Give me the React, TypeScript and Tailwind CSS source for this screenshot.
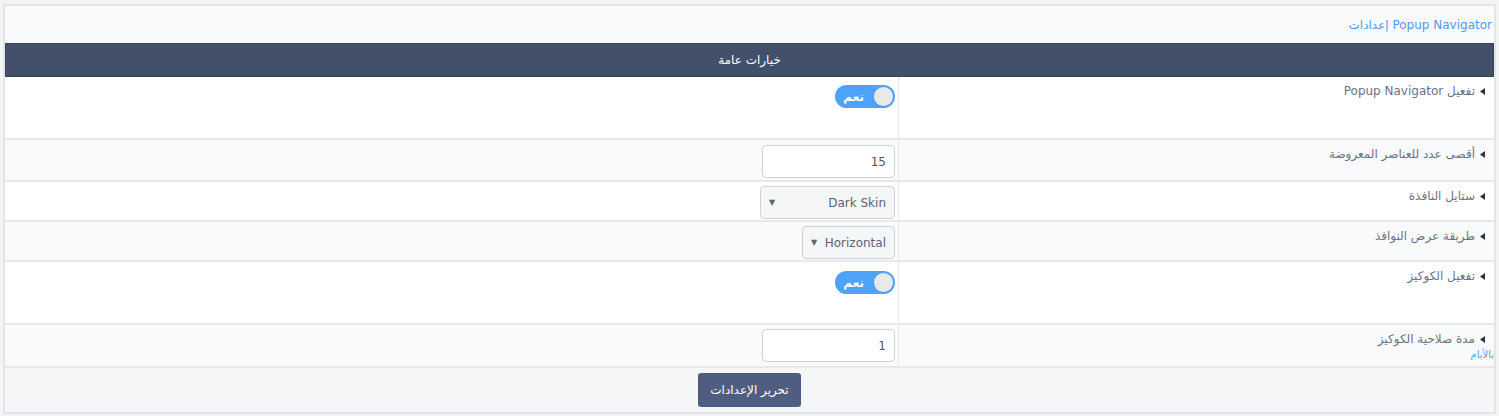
import type { ReactNode } from 'react';

const font = { fontFamily: '"DejaVu Sans", "Noto Sans", sans-serif' };

function Arrow() {
  return (
    <svg width="5" height="7" viewBox="0 0 5 7" className="ml-[5px] shrink-0">
      <path d="M0 3.5 L5 0 L5 7 Z" fill="#333" />
    </svg>
  );
}

function Toggle() {
  return (
    <div className="flex h-[23px] w-[60px] items-center rounded-full bg-[#4ea3f8] p-[2px]">
      <div className="h-[19px] w-[19px] rounded-full bg-[#e9e9e9]" />
      <span className="mr-[10px] text-[12px] font-bold leading-none text-white">نعم</span>
    </div>
  );
}

function TextBox({ value }: { value: string }) {
  return (
    <div className="flex h-[33px] w-[133px] items-center rounded-[4px] border border-[#cfd2d6] bg-white px-[8px] text-[12px] text-[#555]">
      {value}
    </div>
  );
}

function Select({ value, width }: { value: string; width: string }) {
  return (
    <div
      className={`flex h-[33px] ${width} items-center justify-between rounded-[4px] border border-[#cfd2d6] bg-[#f5f6f7] px-[8px] text-[12px] text-[#5d6272]`}
    >
      <span>{value}</span>
      <span className="text-[8px] text-[#666]">▼</span>
    </div>
  );
}

type Row = {
  label: ReactNode;
  note?: string;
  control: ReactNode;
  height: string;
  pad: string;
  bg: string;
};

const rows: Row[] = [
  { label: 'تفعيل Popup Navigator', control: <Toggle />, height: 'h-[63px]', pad: 'pt-[8px]', bg: 'bg-white' },
  { label: 'أقصى عدد للعناصر المعروضة', control: <TextBox value="15" />, height: 'h-[42px]', pad: 'pt-[5px]', bg: 'bg-[#f9fafb]' },
  { label: 'ستايل النافذة', control: <Select value="Dark Skin" width="w-[135px]" />, height: 'h-[40px]', pad: 'pt-[4px]', bg: 'bg-white' },
  { label: 'طريقة عرض النوافذ', control: <Select value="Horizontal" width="w-[93px]" />, height: 'h-[40px]', pad: 'pt-[4px]', bg: 'bg-[#f9fafb]' },
  { label: 'تفعيل الكوكيز', control: <Toggle />, height: 'h-[63px]', pad: 'pt-[9px]', bg: 'bg-white' },
  { label: 'مدة صلاحية الكوكيز', note: 'بالأيام', control: <TextBox value="1" />, height: 'h-[43px]', pad: 'pt-[4px]', bg: 'bg-[#f9fafb]' },
];

export default function App() {
  return (
    <div dir="rtl" style={font} className="h-[416px] w-[1499px] bg-[#f3f4f4] pl-[3px] pr-[3px] pt-[4px]">
      <div className="border-2 border-[#e3e5e7] bg-white">
        <div className="flex h-[37px] items-center bg-[#f9fafb] pr-[2px] text-[12px] text-[#5599ee]">
          Popup Navigator إعدادات
        </div>
        <div className="flex h-[34px] items-center justify-center border border-[#39435a] bg-[#425069] text-[12px] text-white">
          خيارات عامة
        </div>
        {rows.map((r, i) => (
          <div key={i} className={`flex ${r.height} border-b-2 border-[#e6e8ea] ${r.bg}`}>
            <div className="w-[596px] shrink-0 border-l border-[#e6e8ea] pr-[9px] pt-[6px]">
              <div className="flex items-center text-[12px] leading-[16px] text-[#6c7283]">
                <Arrow />
                <span>{r.label}</span>
              </div>
              {r.note && (
                <div className="-mr-[9px] mt-[2px] text-[10px] leading-[12px] text-[#5b9cf0]">{r.note}</div>
              )}
            </div>
            <div className={`flex-1 pr-[3px] ${r.pad}`}>{r.control}</div>
          </div>
        ))}
        <div className="flex h-[44px] justify-center bg-[#f5f6f8] pt-[5px]">
          <div className="flex h-[34px] w-[103px] items-center justify-center rounded-[3px] bg-[#4f5d80] text-[12px] text-white">
            تحرير الإعدادات
          </div>
        </div>
      </div>
    </div>
  );
}
